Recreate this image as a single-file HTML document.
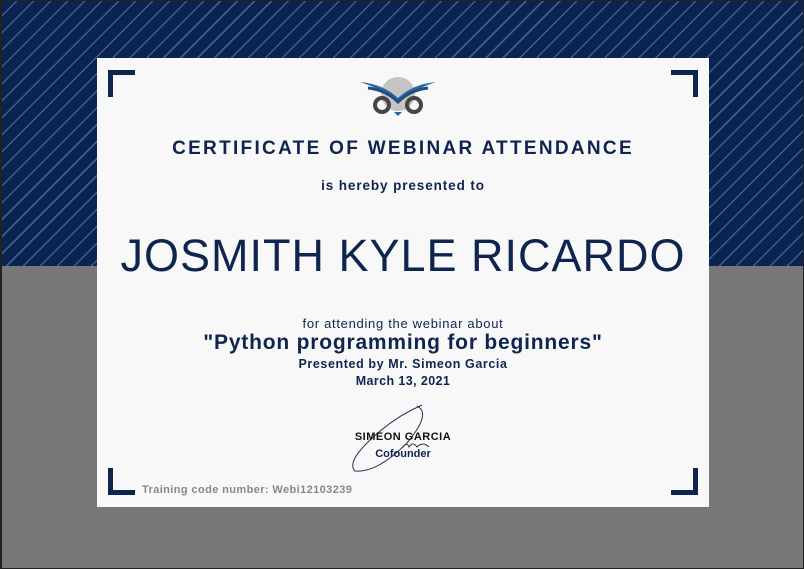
<!DOCTYPE html>
<html><head><style>
html,body{margin:0;padding:0;width:804px;height:569px;overflow:hidden;background:#222;}
.wrap{position:absolute;left:2px;top:1px;width:801px;height:567px;background:#777;}
.top{position:absolute;left:0;top:0;width:801px;height:265px;background:#0b2350;
background-image:repeating-linear-gradient(-45deg,#0b2350 0px,#0b2350 10.5px,#3f5f8a 10.5px,#3f5f8a 12px);}
.cert{position:absolute;left:97px;top:58px;width:612px;height:449px;background:#f8f8f8;font-family:"Liberation Sans",sans-serif;color:#0f2550;text-align:center;}
.c{position:absolute;width:22px;height:22px;border:0 solid #0f2550;}
.t{position:absolute;left:0;width:612px;font-weight:bold;white-space:nowrap;}
</style></head><body>
<div class="wrap"><div class="top"></div></div>
<div class="cert">
<div class="c" style="left:11px;top:12px;border-left-width:5px;border-top-width:5px"></div>
<div class="c" style="right:11px;top:12px;border-right-width:5px;border-top-width:5px"></div>
<div class="c" style="left:11px;bottom:12px;border-left-width:5px;border-bottom-width:5px"></div>
<div class="c" style="right:11px;bottom:12px;border-right-width:5px;border-bottom-width:5px"></div>
<svg style="position:absolute;left:261px;top:14px" width="80" height="46" viewBox="0 0 80 46">
<circle cx="40" cy="22" r="17" fill="#c4c4c4"/>
<path d="M2 10 Q25 12 40 26 Q55 12 78 10 Q60 16 52 22 Q46 26 40 30 Q34 26 28 22 Q20 16 2 10Z" fill="#2a6aa0"/>
<path d="M10 16 Q28 18 40 30 Q52 18 70 16" stroke="#1d4f80" stroke-width="3" fill="none"/>
<circle cx="24" cy="33" r="7" fill="none" stroke="#444" stroke-width="4"/>
<circle cx="56" cy="33" r="7" fill="none" stroke="#444" stroke-width="4"/>
<path d="M36 40 L40 44 L44 40Z" fill="#2a6aa0"/>
</svg>
<div class="t" style="top:80px;font-size:19px;letter-spacing:2.3px">CERTIFICATE OF WEBINAR ATTENDANCE</div>
<div class="t" style="top:120px;font-size:13.5px;letter-spacing:0.9px">is hereby presented to</div>
<div class="t" style="top:172px;font-size:45px;font-weight:normal;letter-spacing:1px">JOSMITH KYLE RICARDO</div>
<div class="t" style="top:258px;font-size:13px;font-weight:normal;letter-spacing:0.7px">for attending the webinar about</div>
<div class="t" style="top:273px;font-size:21px;letter-spacing:0.8px">"Python programming for beginners"</div>
<div class="t" style="top:299px;font-size:12.5px;letter-spacing:0.6px">Presented by Mr. Simeon Garcia</div>
<div class="t" style="top:316px;font-size:12.5px;letter-spacing:0.4px">March 13, 2021</div>
<svg style="position:absolute;left:250px;top:345px" width="90" height="75"><path d="M70 3 Q85 10 60 40 Q30 70 8 68 Q0 60 20 40 Q45 15 75 2" fill="none" stroke="#3a2a55" stroke-width="1"/><path d="M55 45 Q60 38 62 44 Q66 38 70 44 Q76 38 82 44" fill="none" stroke="#333" stroke-width="1"/></svg>
<div class="t" style="top:373px;font-size:11px;color:#111;letter-spacing:0.5px">SIMEON GARCIA</div>
<div class="t" style="top:390px;font-size:11px">Cofounder</div>
<div style="position:absolute;left:45px;top:426px;font-size:11px;font-weight:bold;color:#888;letter-spacing:0.4px">Training code number: Webi12103239</div>
</div>
</body></html>
